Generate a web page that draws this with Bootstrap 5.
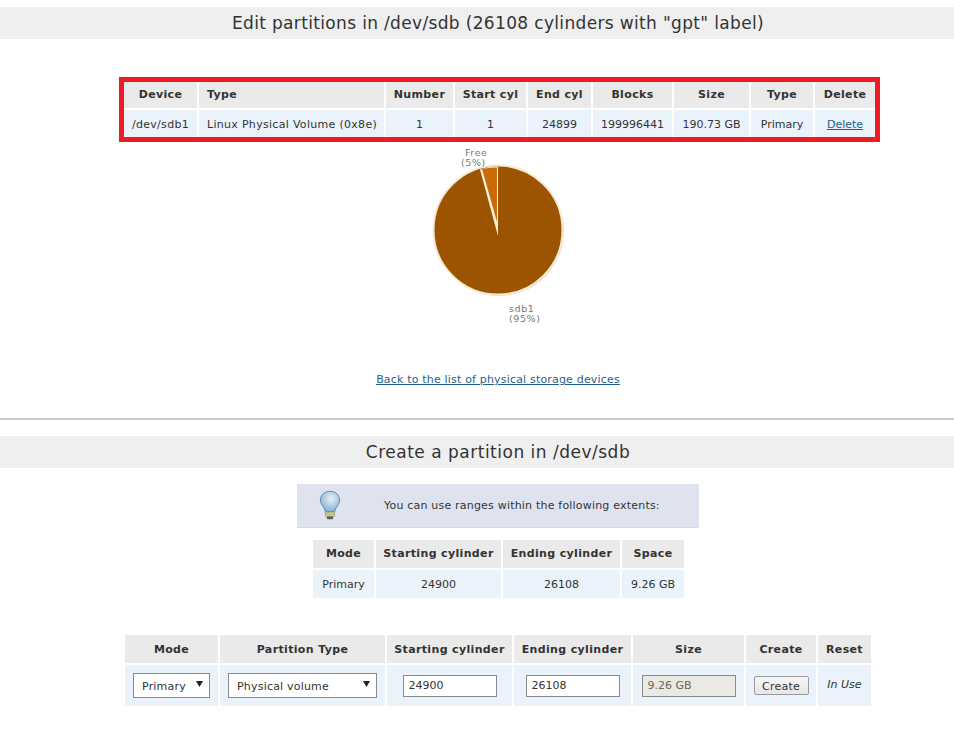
<!DOCTYPE html>
<html lang="en">
<head>
    <meta charset="UTF-8">
    <meta name="viewport" content="width=device-width, initial-scale=1.0">
    <title>Edit partitions</title>
    <link rel="stylesheet" href="https://cdn.jsdelivr.net/npm/bootstrap@5.3.2/dist/css/bootstrap.min.css">
    <style>
        body { font-family: "DejaVu Sans", Verdana, sans-serif; font-size: 11px; color: #333; background: #fff; }
        .page-title { background: #efefef; height: 32px; line-height: 32px; font-size: 17px; color: #333; text-align: center; padding-left: 42px; }
        .first-title { margin-top: 7px; letter-spacing: .34px; }
        .second-title { margin-top: 16px; letter-spacing: .5px; }
        .red-box { width: 761px; height: 65px; margin: 38px 0 0 119px; border: 5px solid #ed1c24; }
        .data-grid { border-collapse: separate; border-spacing: 2px; table-layout: fixed; margin: 0; }
        .data-grid th { background: #eaeaea; font-weight: 700; text-align: center; letter-spacing: .35px; padding: 0; color: #333; }
        .data-grid td { background: #eaf3fb; text-align: center; padding: 0; color: #333; }
        .data-grid .to-left { text-align: left; padding-left: 8px; }
        .data-grid .wide-text { letter-spacing: .3px; }
        .grid-one { width: 755px; margin: -2px 0 0 -2px; }
        .grid-one th { height: 26px; }
        .grid-one td { height: 27px; padding-top: 3px; }
        .grid-two { width: 375px; margin: 10px auto 0 311px; }
        .grid-two th { height: 28px; }
        .grid-two td { height: 28px; padding-top: 2px; }
        .grid-three { width: 750px; margin: 33px 0 0 123px; }
        .grid-three th { height: 28px; padding-top: 2px; }
        .grid-three td { height: 41px; }
        .cw-53 { width: 53px; } .cw-60 { width: 60px; } .cw-61 { width: 61px; } .cw-62 { width: 62px; }
        .cw-63 { width: 63px; } .cw-67 { width: 67px; } .cw-70 { width: 70px; } .cw-71 { width: 71px; }
        .cw-73 { width: 73px; } .cw-75 { width: 75px; } .cw-79 { width: 79px; } .cw-93 { width: 93px; }
        .cw-111 { width: 111px; } .cw-117 { width: 117px; } .cw-125 { width: 125px; } .cw-165 { width: 165px; } .cw-185 { width: 185px; }
        .pie-wrap { height: 226px; margin-left: 430px; }
        .pie-wrap svg { display: block; }
        .pie-label { font-family: "DejaVu Sans", sans-serif; font-size: 9.500px; fill: #777; letter-spacing: .6px; }
        .back-link { text-align: center; height: 20px; line-height: 20px; margin-top: 2px; padding-left: 42px; letter-spacing: .18px; }
        a { color: #1f5f8b; }
        .divider { height: 2px; background: #ccc; margin-top: 28px; }
        .hint-box { width: 402px; height: 44px; margin: 16px 0 0 297px; background: #dfe3f0; border-bottom: 1px solid #d3d7e6; }
        .hint-box svg { margin-left: 22px; }
        .hint-box span { margin-left: 43px; padding-top: 2px; letter-spacing: .2px; }
        .field-box { font-family: "DejaVu Sans", sans-serif; font-size: 11px; color: #333; border: 1px solid #8a8a8a; border-radius: 0; padding: 3px 8px 0; height: 25px; box-shadow: none; letter-spacing: .2px; }
        .drop-box { appearance: none; background: #fff url("data:image/svg+xml,%3Csvg xmlns='http://www.w3.org/2000/svg' width='7' height='6'%3E%3Cpath d='M0 0h7L3.500 6z' fill='%23222'/%3E%3C/svg%3E") no-repeat right 6px top 7px; }
        .drop-short { width: 77px; margin-left: 8px; }
        .drop-long { width: 149px; margin-left: 8px; }
        .text-box { height: 22px; width: 94px; padding: 0 5px; margin: 0 auto; display: block; letter-spacing: 0; }
        .text-box:disabled { background: #ebe9e3; color: #666; opacity: 1; }
        .create-btn { font-size: 11px; color: #333; background: linear-gradient(#f6f6f6, #e6e6e6); border: 1px solid #9a9a9a; border-radius: 2px; height: 19px; width: 55px; padding: 1px 0 0; line-height: 17px; letter-spacing: .2px; }
    </style>
</head>
<body>
    <div class="page-title first-title">Edit partitions in /dev/sdb (26108 cylinders with "gpt" label)</div>

    <div class="red-box">
        <table class="data-grid grid-one">
            <colgroup>
                <col class="cw-73"><col class="cw-185"><col class="cw-67"><col class="cw-71">
                <col class="cw-63"><col class="cw-79"><col class="cw-75"><col class="cw-62"><col class="cw-60">
            </colgroup>
            <tr>
                <th>Device</th><th class="to-left">Type</th><th>Number</th><th>Start cyl</th><th>End cyl</th><th>Blocks</th><th>Size</th><th>Type</th><th>Delete</th>
            </tr>
            <tr>
                <td class="wide-text">/dev/sdb1</td><td class="to-left wide-text">Linux Physical Volume (0x8e)</td><td>1</td><td>1</td><td>24899</td><td>199996441</td><td>190.73 GB</td><td>Primary</td><td><a href="#">Delete</a></td>
            </tr>
        </table>
    </div>

    <div class="pie-wrap">
        <svg width="140" height="186" viewBox="430 142 140 186">
            <circle cx="499" cy="231" r="65" fill="#e4e0d6"/>
            <circle cx="498" cy="230" r="64.500" fill="#9c5400" stroke="#f3ead3" stroke-width="2"/>
            <path d="M480 169.500A63.500 63.500 0 0 1 498 166.500V236Z" fill="#f8f1de"/>
            <path d="M482 169L497 222V167.500A63 63 0 0 0 482 169Z" fill="#c96c08"/>
            <text class="pie-label" x="465" y="156">Free</text>
            <text class="pie-label" x="461" y="166">(5%)</text>
            <text class="pie-label" x="509" y="312">sdb1</text>
            <text class="pie-label" x="509" y="322">(95%)</text>
        </svg>
    </div>

    <div class="back-link"><a href="#">Back to the list of physical storage devices</a></div>
    <div class="divider"></div>

    <div class="page-title second-title">Create a partition in /dev/sdb</div>

    <div class="hint-box d-flex align-items-center">
        <svg width="22" height="31" viewBox="0 0 24 33">
            <defs>
                <radialGradient id="bulbGlow" cx=".55" cy=".35" r=".7">
                    <stop offset="0" stop-color="#e6f1fa"/>
                    <stop offset="1" stop-color="#7fa9cf"/>
                </radialGradient>
            </defs>
            <path d="M12 1C5.500 1 1.500 5.500 1.500 10.500c0 5 4.500 7.500 5.500 13h10c1-5.500 5.500-8 5.500-13C22.500 5.500 18.500 1 12 1z" fill="url(#bulbGlow)" stroke="#5f87a8"/>
            <rect x="7" y="23.500" width="10" height="5" rx="1" fill="#c9c48c" stroke="#8a8660" stroke-width=".6"/>
            <rect x="8.500" y="28.500" width="7" height="3" rx="1" fill="#55606a"/>
        </svg>
        <span>You can use ranges within the following extents:</span>
    </div>

    <table class="data-grid grid-two">
        <colgroup>
            <col class="cw-61"><col class="cw-125"><col class="cw-117"><col class="cw-62">
        </colgroup>
        <tr><th>Mode</th><th>Starting cylinder</th><th>Ending cylinder</th><th>Space</th></tr>
        <tr><td>Primary</td><td>24900</td><td>26108</td><td>9.26 GB</td></tr>
    </table>

    <table class="data-grid grid-three">
        <colgroup>
            <col class="cw-93"><col class="cw-165"><col class="cw-125"><col class="cw-117">
            <col class="cw-111"><col class="cw-70"><col class="cw-53">
        </colgroup>
        <tr><th>Mode</th><th>Partition Type</th><th>Starting cylinder</th><th>Ending cylinder</th><th>Size</th><th>Create</th><th>Reset</th></tr>
        <tr>
            <td><select class="field-box drop-box drop-short d-block"><option>Primary</option></select></td>
            <td><select class="field-box drop-box drop-long d-block"><option>Physical volume</option></select></td>
            <td><input class="field-box text-box" type="text" value="24900"></td>
            <td><input class="field-box text-box" type="text" value="26108"></td>
            <td><input class="field-box text-box" type="text" value="9.26 GB" disabled></td>
            <td><button class="create-btn" type="button">Create</button></td>
            <td><em>In Use</em></td>
        </tr>
    </table>
</body>
</html>
